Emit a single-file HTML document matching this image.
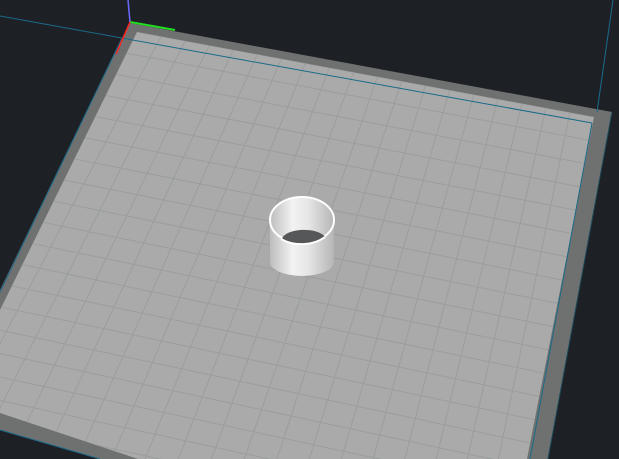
<!DOCTYPE html>
<html><head><style>html,body{margin:0;padding:0;background:#1d2125;width:619px;height:459px;overflow:hidden}svg{display:block}</style></head>
<body>
<svg id="s" width="619" height="459" viewBox="0 0 619 459" xmlns="http://www.w3.org/2000/svg">
<defs>
<clipPath id="bed"><polygon points="137,32 594,117 527,459 138,459 0,413 0,310"/></clipPath>
<linearGradient id="cyl" x1="0" x2="1" y1="0" y2="0">
<stop offset="0" stop-color="#bdbdbd"/><stop offset="0.35" stop-color="#f2f2f2"/><stop offset="0.6" stop-color="#e6e6e6"/><stop offset="1" stop-color="#b5b5b5"/></linearGradient>
</defs>
<rect width="619" height="459" fill="#1d2125"/>
<polygon points="130,23 612,112 548,459 100,459 0,430 0,290 122,38" fill="#6f7171"/>
<polygon points="137,32 594,117 527,459 138,459 0,413 0,310" fill="#aaaaaa"/>
<g id="grid" clip-path="url(#bed)" stroke="#9a9d9e" stroke-width="1"></g>
<line x1="0" y1="16" x2="592" y2="123" stroke="#1a6a8a" stroke-width="1"/>
<line x1="592" y1="123" x2="530" y2="459" stroke="#1a6a8a" stroke-width="1"/>
<line x1="613" y1="0" x2="597" y2="112" stroke="#1a6a8a" stroke-width="1"/>
<line x1="122" y1="38" x2="0" y2="292" stroke="#1a6a8a" stroke-width="1"/>
<line x1="0" y1="430" x2="100" y2="459" stroke="#1a6a8a" stroke-width="1"/>
<line x1="612" y1="112" x2="548" y2="459" stroke="#1a4a5a" stroke-width="1"/>
<line x1="130" y1="22" x2="128" y2="0" stroke="#6a6aff" stroke-width="1.5"/>
<line x1="130" y1="22" x2="175" y2="30" stroke="#22dd22" stroke-width="2"/>
<line x1="130" y1="22" x2="116" y2="54" stroke="#ff2222" stroke-width="1.5"/>
<path d="M270,220 L270,262 A32,14 0 0 0 334,262 L334,220 Z" fill="url(#cyl)"/>
<ellipse cx="302" cy="220" rx="32" ry="23" fill="url(#cyl)" stroke="#fff" stroke-width="2"/>
<path d="M282,239 A22,10 0 0 1 325,237 A32,23 0 0 1 282,239 Z" fill="#555758"/>
<path d="M281,239 A33,24 0 0 0 325,237" fill="none" stroke="#fff" stroke-width="2"/>
</svg>
<script>
var g=document.getElementById('grid');
var TL=[137,32],TR=[594,117],BR=[510,560],BL=[-80,430];
function lerp(a,b,t){return [a[0]+(b[0]-a[0])*t,a[1]+(b[1]-a[1])*t];}
var N=19;
for(var i=0;i<=N;i++){var t=i/N;
var a=lerp(TL,TR,t),b=lerp(BL,BR,t);
var c=lerp(TL,BL,t),d=lerp(TR,BR,t);
[[a,b],[c,d]].forEach(function(p){var l=document.createElementNS('http://www.w3.org/2000/svg','line');
l.setAttribute('x1',p[0][0]);l.setAttribute('y1',p[0][1]);l.setAttribute('x2',p[1][0]);l.setAttribute('y2',p[1][1]);g.appendChild(l);});}
</script>
</body></html>
